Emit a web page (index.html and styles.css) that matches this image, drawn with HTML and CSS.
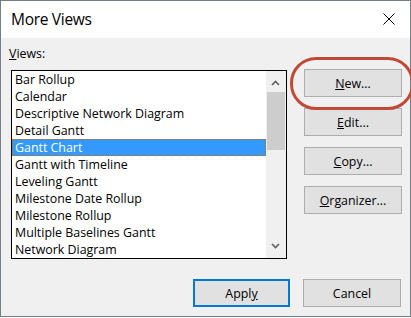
FILE: index.html
```html
<!DOCTYPE html>
<html lang="en">
<head>
    <meta charset="UTF-8">
    <meta name="viewport" content="width=device-width, initial-scale=1.0">
    <title>More Views</title>
    <link rel="stylesheet" href="styles.css">
</head>
<body>

    <div class="window">
        <div class="titlebar">
            <span class="title">More Views</span>
            <svg class="close" width="12" height="12" viewBox="0 0 12 12">
                <path d="M0.5 0.5 L11.5 11.5 M11.5 0.5 L0.5 11.5" stroke="#000" stroke-width="1" fill="none"/>
            </svg>
        </div>

        <div class="main">
            <div class="left">
                <div class="label"><u>V</u>iews:</div>
                <div class="listbox">
                    <ul class="items">
                        <li>Bar Rollup</li>
                        <li>Calendar</li>
                        <li>Descriptive Network Diagram</li>
                        <li>Detail Gantt</li>
                        <li class="selected">Gantt Chart</li>
                        <li>Gantt with Timeline</li>
                        <li>Leveling Gantt</li>
                        <li>Milestone Date Rollup</li>
                        <li>Milestone Rollup</li>
                        <li>Multiple Baselines Gantt</li>
                        <li>Network Diagram</li>
                    </ul>
                    <div class="scrollbar">
                        <svg class="arrow up" width="9" height="6" viewBox="0 0 9 6">
                            <path d="M1 5 L4.5 1.5 L8 5" stroke="#606060" stroke-width="1.6" fill="none"/>
                        </svg>
                        <div class="thumb"></div>
                        <svg class="arrow down" width="9" height="6" viewBox="0 0 9 6">
                            <path d="M1 1 L4.5 4.5 L8 1" stroke="#606060" stroke-width="1.6" fill="none"/>
                        </svg>
                    </div>
                </div>
            </div>

            <div class="side">
                <div class="highlight">
                    <button class="btn"><u>N</u>ew...</button>
                </div>
                <button class="btn"><u>E</u>dit...</button>
                <button class="btn"><u>C</u>opy...</button>
                <button class="btn"><u>O</u>rganizer...</button>
            </div>
        </div>

        <div class="footer">
            <button class="btn default">Appl<u>y</u></button>
            <button class="btn">Cancel</button>
        </div>
    </div>

</body>
</html>
```

FILE: styles.css
```css
body {
    margin: 0;
    background: #ffffff;
    font-family: "Open Sans", "Noto Sans", sans-serif;
    font-size: 12.4px;
    color: #000;
}
.window {
    width: 411px;
    height: 317px;
    box-sizing: border-box;
    border: 1px solid #737f86;
    background: #f0f0f0;
    position: relative;
}
.titlebar {
    height: 37px;
    background: #ffffff;
    display: flex;
    align-items: center;
    justify-content: space-between;
    padding: 0 15px 0 10px;
}
.title {
    font-size: 15.5px;
    letter-spacing: -0.3px;
    margin-top: -1px;
}
.close {
    margin-top: -1px;
}
.main {
    display: flex;
    padding: 8px 0 0 8px;
}
.left {
    width: 280px;
}
.label {
    height: 16px;
    line-height: 16px;
    margin-bottom: 8px;
}
.listbox {
    margin-left: 2px;
    width: 276px;
    height: 189px;
    box-sizing: border-box;
    border: 1px solid #000;
    background: #fff;
    display: flex;
}
.items {
    list-style: none;
    margin: 0;
    padding: 0;
    flex: 1;
}
.items li {
    height: 17px;
    line-height: 17px;
    padding-left: 3px;
    white-space: nowrap;
}
.items li.selected {
    background: #3399ff;
    color: #fff;
    outline: 1px dotted #c86a00;
    outline-offset: -1px;
}
.scrollbar {
    width: 20px;
    background: #f0f0f0;
    position: relative;
}
.arrow {
    position: absolute;
    left: 5px;
}
.arrow.up {
    top: 9px;
}
.arrow.down {
    bottom: 9px;
}
.thumb {
    margin: 21px 1px 0 1px;
    height: 58px;
    background: #cdcdcd;
}
.side {
    margin-left: 15px;
    padding-top: 23px;
    display: flex;
    flex-direction: column;
    gap: 11px;
}
.highlight {
    position: relative;
}
.highlight::before {
    content: "";
    position: absolute;
    left: -14px;
    top: -12px;
    width: 118px;
    height: 47px;
    border: 3px solid #bf4b36;
    border-radius: 26px;
}
.btn {
    width: 98px;
    height: 28px;
    box-sizing: border-box;
    border: 1px solid #adadad;
    background: #e1e1e1;
    font-family: inherit;
    font-size: 12.4px;
    color: #000;
    padding: 0;
    display: block;
}
.footer {
    display: flex;
    justify-content: flex-end;
    gap: 13px;
    padding: 20px 9px 0 0;
}
.btn.default {
    width: 97px;
    border: 2px solid #0078d7;
}
```
